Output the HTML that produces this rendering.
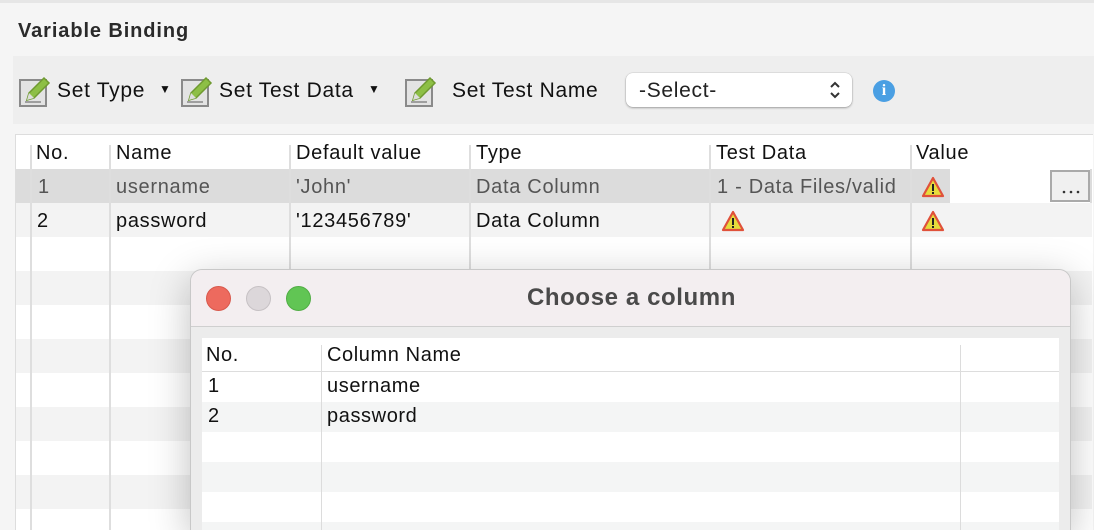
<!DOCTYPE html>
<html><head><meta charset="utf-8"><style>
*{margin:0;padding:0;box-sizing:border-box}
html{width:1094px;height:530px;overflow:hidden}
body{width:1094px;height:530px;overflow:hidden;background:#f5f5f5;font-family:"Liberation Sans",sans-serif;position:relative;color:#111}
.abs{position:absolute}
.t{position:absolute;font-size:20px;white-space:nowrap;letter-spacing:0.7px}
.row{position:absolute;left:16px;width:1076px;height:34px}
.vl{position:absolute;width:2px;background:#dedede}
.dl{position:absolute;width:1px;background:#dcdcdc}
.d{font-size:20px;letter-spacing:0.6px}
</style></head><body>
<div class="abs" style="left:0;top:0;width:1094px;height:3px;background:#e6e6e6"></div>
<div class="t" style="left:18px;top:20px;font-weight:bold;font-size:20px;letter-spacing:0.9px;color:#2a2a2a">Variable Binding</div>
<div class="abs" style="left:13px;top:56px;width:1081px;height:68px;background:#eeeeee"></div>
<svg class="abs" style="left:19px;top:74px" width="34" height="34" viewBox="0 0 34 34"><rect x="1" y="6" width="26" height="26" fill="#e3e3e3" stroke="#8a8a8a" stroke-width="2"/><path d="M8 26 L10 19 L25 4 L30 9 L15 24 Z" fill="#8dbf45" stroke="#6f9a30" stroke-width="1.5"/><path d="M8 26 L10 19 L15 24 Z" fill="#ddd"/><path d="M6 28 H22" stroke="#888" stroke-width="1.5"/></svg>
<div class="t" style="left:57px;top:79px;font-size:21px">Set Type</div>
<div class="t" style="left:159px;top:82px;font-size:12px">▼</div>
<svg class="abs" style="left:181px;top:74px" width="34" height="34" viewBox="0 0 34 34"><rect x="1" y="6" width="26" height="26" fill="#e3e3e3" stroke="#8a8a8a" stroke-width="2"/><path d="M8 26 L10 19 L25 4 L30 9 L15 24 Z" fill="#8dbf45" stroke="#6f9a30" stroke-width="1.5"/><path d="M8 26 L10 19 L15 24 Z" fill="#ddd"/><path d="M6 28 H22" stroke="#888" stroke-width="1.5"/></svg>
<div class="t" style="left:219px;top:79px;font-size:21px">Set Test Data</div>
<div class="t" style="left:368px;top:82px;font-size:12px">▼</div>
<svg class="abs" style="left:405px;top:74px" width="34" height="34" viewBox="0 0 34 34"><rect x="1" y="6" width="26" height="26" fill="#e3e3e3" stroke="#8a8a8a" stroke-width="2"/><path d="M8 26 L10 19 L25 4 L30 9 L15 24 Z" fill="#8dbf45" stroke="#6f9a30" stroke-width="1.5"/><path d="M8 26 L10 19 L15 24 Z" fill="#ddd"/><path d="M6 28 H22" stroke="#888" stroke-width="1.5"/></svg>
<div class="t" style="left:452px;top:79px;font-size:21px">Set Test Name</div>
<div class="abs" style="left:626px;top:73px;width:226px;height:34px;background:#fff;border-radius:7px;box-shadow:0 1px 2px rgba(0,0,0,.3),0 0 0 .5px rgba(0,0,0,.1)"></div>
<div class="t" style="left:639px;top:79px;color:#222;font-size:21px">-Select-</div>
<svg class="abs" style="left:829px;top:81px" width="12" height="18"><path d="M2 6 L6 2 L10 6 M2 12 L6 16 L10 12" stroke="#333" stroke-width="2" fill="none"/></svg>
<div class="abs" style="left:873px;top:80px;width:22px;height:22px;border-radius:50%;background:#4a9fe3;color:#fff;font-weight:bold;font-size:16px;text-align:center;line-height:22px;font-family:'Liberation Serif',serif">i</div>
<!-- table -->
<div class="abs" style="left:15px;top:134px;width:1078px;height:396px;background:#fff;border-left:1px solid #ddd;border-top:1px solid #ddd"></div>
<div class="row" style="top:169px;background:#dcdcdc"></div>
<div class="row" style="top:203px;background:#f3f3f3"></div>
<div class="row" style="top:271px;background:#f3f3f3"></div>
<div class="row" style="top:339px;background:#f3f3f3"></div>
<div class="row" style="top:407px;background:#f3f3f3"></div>
<div class="row" style="top:475px;background:#f3f3f3"></div>
<div class="abs" style="left:950px;top:169px;width:140px;height:34px;background:#fff"></div>
<div class="abs" style="left:1050px;top:170px;width:40px;height:32px;background:#f0f0f0;border:2px solid #aaa"></div>
<svg class="abs" style="left:1061px;top:190px" width="20" height="4"><circle cx="3" cy="2" r="1.3" fill="#333"/><circle cx="10" cy="2" r="1.3" fill="#333"/><circle cx="17" cy="2" r="1.3" fill="#333"/></svg>
<div class="vl" style="left:30px;top:145px;height:385px"></div>
<div class="vl" style="left:109px;top:145px;height:385px"></div>
<div class="vl" style="left:289px;top:145px;height:385px"></div>
<div class="vl" style="left:469px;top:145px;height:385px"></div>
<div class="vl" style="left:709px;top:145px;height:385px"></div>
<div class="vl" style="left:910px;top:145px;height:385px"></div>
<div class="t" style="left:36px;top:142px">No.</div>
<div class="t" style="left:116px;top:142px">Name</div>
<div class="t" style="left:296px;top:142px">Default value</div>
<div class="t" style="left:476px;top:142px">Type</div>
<div class="t" style="left:716px;top:142px">Test Data</div>
<div class="t" style="left:916px;top:142px">Value</div>
<div class="t" style="left:38px;top:176px;color:#555">1</div>
<div class="t" style="left:116px;top:176px;color:#555">username</div>
<div class="t" style="left:296px;top:176px;color:#555">'John'</div>
<div class="t" style="left:476px;top:176px;color:#555">Data Column</div>
<div class="t" style="left:717px;top:176px;color:#555;width:192px;overflow:hidden">1 - Data Files/valid</div>
<div class="t" style="left:37px;top:210px">2</div>
<div class="t" style="left:116px;top:210px">password</div>
<div class="t" style="left:296px;top:210px">'123456789'</div>
<div class="t" style="left:476px;top:210px">Data Column</div>
<svg class="abs" style="left:921px;top:176px" width="24" height="22"><path d="M12 2 L22 20 H2 Z" fill="#e6dc3c" stroke="#e0513a" stroke-width="2.2" stroke-linejoin="round"/><rect x="11" y="8" width="2" height="7" fill="#222"/><rect x="11" y="16" width="2" height="2" fill="#222"/></svg>
<svg class="abs" style="left:721px;top:210px" width="24" height="22"><path d="M12 2 L22 20 H2 Z" fill="#e6dc3c" stroke="#e0513a" stroke-width="2.2" stroke-linejoin="round"/><rect x="11" y="8" width="2" height="7" fill="#222"/><rect x="11" y="16" width="2" height="2" fill="#222"/></svg>
<svg class="abs" style="left:921px;top:210px" width="24" height="22"><path d="M12 2 L22 20 H2 Z" fill="#e6dc3c" stroke="#e0513a" stroke-width="2.2" stroke-linejoin="round"/><rect x="11" y="8" width="2" height="7" fill="#222"/><rect x="11" y="16" width="2" height="2" fill="#222"/></svg>
<!-- dialog -->
<div class="abs" style="left:190px;top:269px;width:881px;height:261px;background:#ececec;border-radius:12px 12px 0 0;border:1px solid #c8c8c8;border-bottom:none;box-shadow:0 10px 40px rgba(0,0,0,.25);overflow:hidden">
 <div class="abs" style="left:0;top:0;width:881px;height:57px;background:#f3eef0;border-bottom:1px solid #cfcfcf"></div>
 <div class="abs" style="left:15px;top:16px;width:25px;height:25px;border-radius:50%;background:#ed6a5e;border:1px solid #d8584c"></div>
 <div class="abs" style="left:55px;top:16px;width:25px;height:25px;border-radius:50%;background:#dcd7da;border:1px solid #c6c1c4"></div>
 <div class="abs" style="left:95px;top:16px;width:25px;height:25px;border-radius:50%;background:#61c554;border:1px solid #50ad44"></div>
 <div class="t" style="left:0;width:881px;text-align:center;top:14px;font-weight:bold;font-size:24px;letter-spacing:0.6px;color:#4a4a4a">Choose a column</div>
 <div class="abs" style="left:11px;top:68px;width:857px;height:200px;background:#fff"></div>
 <div class="abs" style="left:11px;top:101px;width:857px;height:1px;background:#ddd"></div>
 <div class="abs" style="left:11px;top:132px;width:857px;height:30px;background:#f4f5f5"></div>
 <div class="abs" style="left:11px;top:192px;width:857px;height:30px;background:#f4f5f5"></div>
 <div class="abs" style="left:11px;top:252px;width:857px;height:16px;background:#f4f5f5"></div>
 <div class="dl" style="left:130px;top:75px;height:190px"></div>
 <div class="dl" style="left:769px;top:75px;height:190px"></div>
 <div class="t d" style="left:15px;top:74px">No.</div>
 <div class="t d" style="left:136px;top:74px">Column Name</div>
 <div class="t d" style="left:17px;top:105px">1</div>
 <div class="t d" style="left:136px;top:105px">username</div>
 <div class="t d" style="left:17px;top:135px">2</div>
 <div class="t d" style="left:136px;top:135px">password</div>
</div>
</body></html>
